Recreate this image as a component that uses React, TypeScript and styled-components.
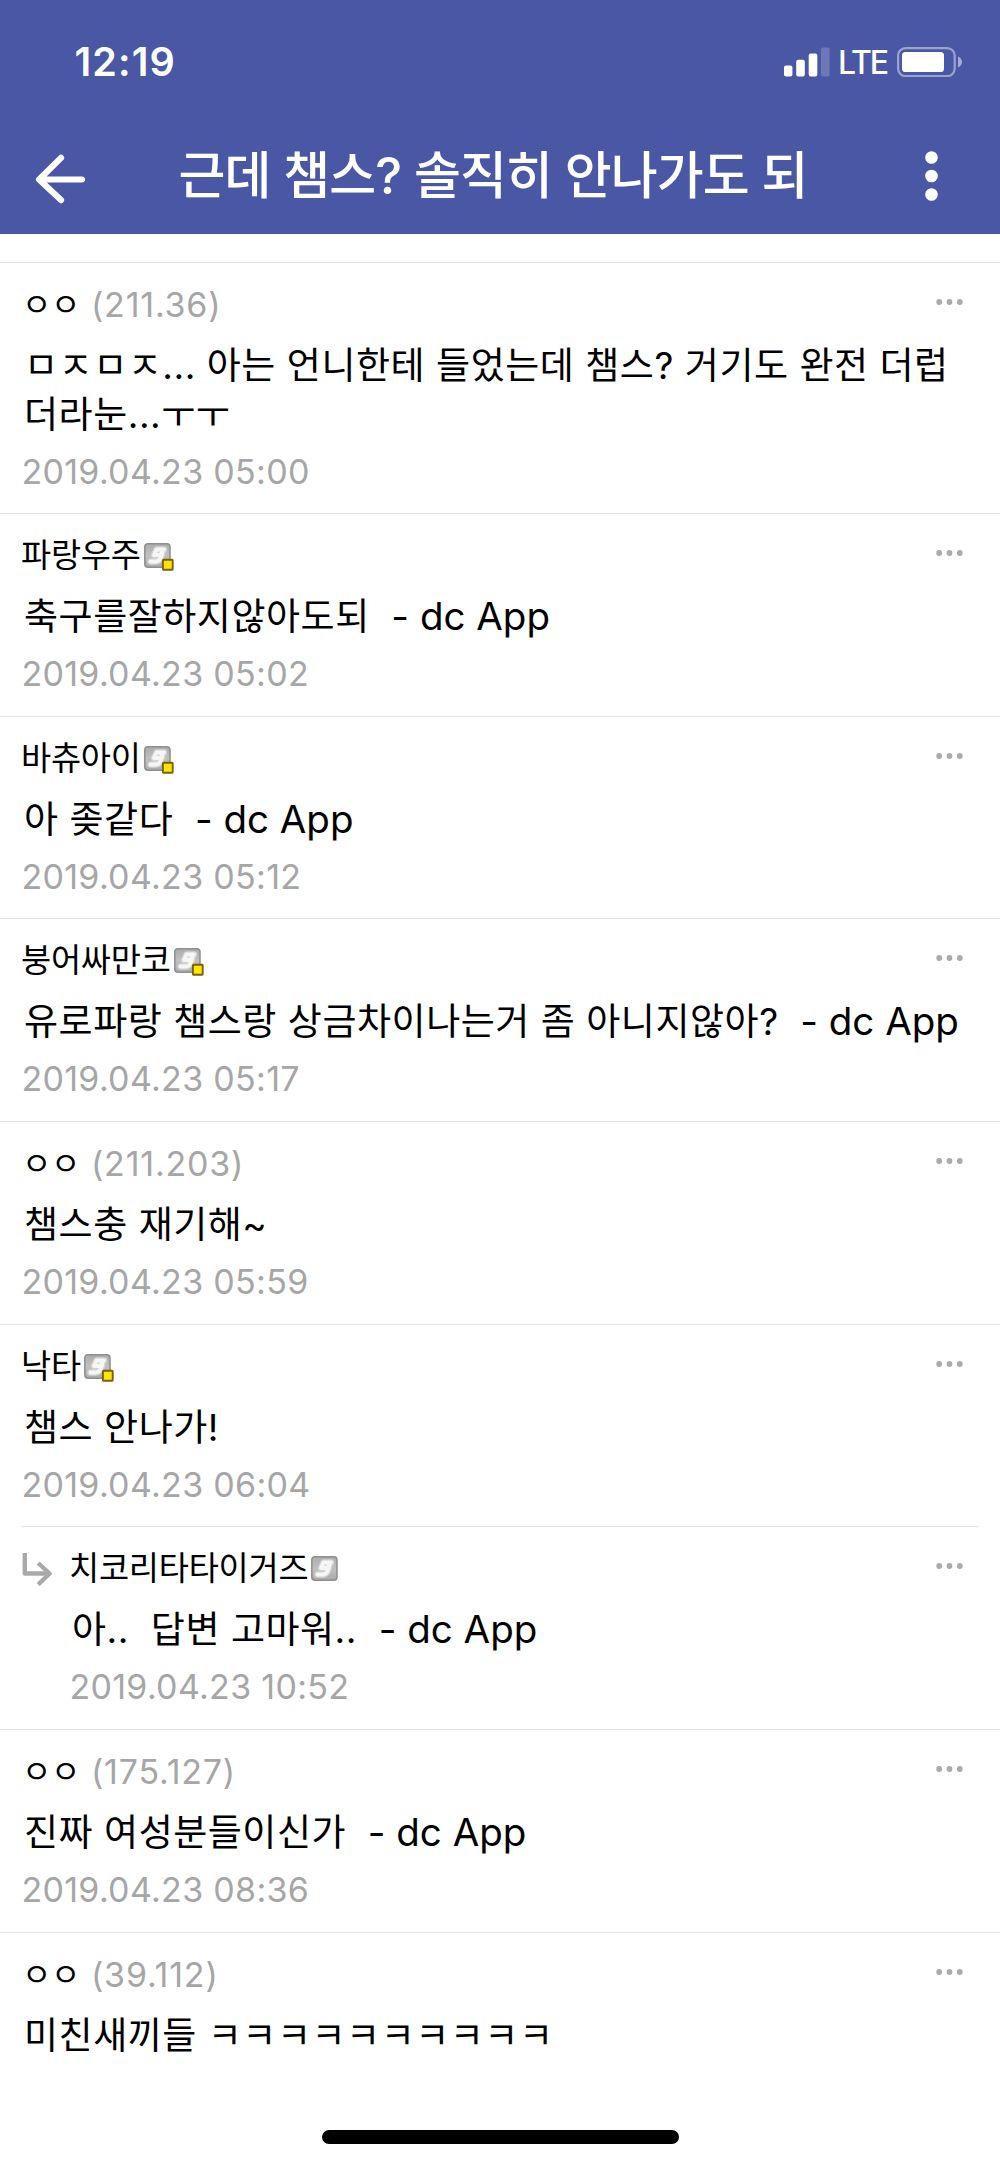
import React from 'react';
import styled, { createGlobalStyle } from 'styled-components';

const GlobalStyle = createGlobalStyle`
  *, *::before, *::after { box-sizing: border-box; }
  body {
    margin: 0;
    background: #fff;
    font-family: Inter, 'Noto Sans CJK KR', sans-serif;
    color: #000;
  }
`;

const Screen = styled.div`
  display: flex;
  flex-direction: column;
  width: 1000px;
  height: 2165px;
  overflow: hidden;
  background: #fff;
`;

const Header = styled.header`
  display: flex;
  flex-direction: column;
  flex: none;
  height: 234.4px;
  background: #4a57a5;
  color: #fff;
`;

const StatusBar = styled.div`
  display: flex;
  align-items: center;
  height: 123px;
  padding: 0 37px 0 74.5px;
`;

const Clock = styled.time`
  flex: 1;
  font-size: 39.5px;
  font-weight: 600;
  line-height: 48px;
  letter-spacing: 1.1px;
`;

const Network = styled.span`
  margin: 2px 10px 0 8.5px;
  font-size: 32px;
  font-weight: 500;
  line-height: 40px;
  letter-spacing: -2.1px;
`;

const NavBar = styled.div`
  display: flex;
  align-items: center;
  height: 111px;
  padding: 0 62px 0 35px;
`;

const IconButton = styled.button<{ $lift?: number }>`
  display: flex;
  flex: none;
  margin-bottom: ${(p) => p.$lift ?? 0}px;
  padding: 0;
  border: 0;
  background: none;
  color: inherit;
`;

const Title = styled.h1`
  flex: 1;
  margin: 0 0 6px 93.5px;
  font-size: 51px;
  font-weight: 500;
  line-height: 64px;
  letter-spacing: -0.9px;
  white-space: nowrap;
`;

const List = styled.main`
  display: flex;
  flex-direction: column;
  flex: 1;
  padding-top: 27.9px;
`;

const Row = styled.article<{ $reply?: boolean }>`
  display: flex;
  flex: none;
  margin: ${(p) => (p.$reply ? '0 22px' : '0')};
  padding: 17px ${(p) => (p.$reply ? 14 : 36)}px 17.65px ${(p) => (p.$reply ? 0 : 22)}px;
  border-top: 1px solid #e2e2e2;
`;

const ReplyMark = styled.div`
  flex: none;
  width: 48px;
  padding-top: 8px;
`;

const Content = styled.div`
  flex: 1;
  min-width: 0;
`;

const Meta = styled.div`
  display: flex;
  align-items: center;
  height: 48px;
`;

const Author = styled.span<{ $guest?: boolean }>`
  margin: ${(p) => (p.$guest ? '2px 0 0 0' : '0 0 0 -1px')};
  font-size: ${(p) => (p.$guest ? 32 : 32.8)}px;
  line-height: 48px;
  letter-spacing: ${(p) => (p.$guest ? -0.5 : -0.25)}px;
  white-space: nowrap;
`;

const Ip = styled.span`
  margin: 2px 0 0 11px;
  font-size: 34px;
  line-height: 48px;
  letter-spacing: 0.8px;
  color: #a6a6a6;
`;

const BadgeSlot = styled.span`
  display: flex;
  margin: 4px 0 0 3px;
`;

const MoreSlot = styled.span`
  display: flex;
  margin: 0 1.5px 4px auto;
`;

const Body = styled.p`
  margin: 14px -20px 0 2px;
  font-size: 37px;
  line-height: 48.3px;
  letter-spacing: 0.53px;
  white-space: pre;
`;

const Signature = styled.span`
  font-size: 38.5px;
  line-height: 1;
  letter-spacing: 0;
`;

const Stamp = styled.time`
  display: block;
  margin: 8.7px 0 0 -0.6px;
  font-size: 34px;
  line-height: 48px;
  letter-spacing: 0.31px;
  color: #a6a6a6;
`;

const HomeIndicator = styled.div`
  align-self: center;
  flex: none;
  width: 357px;
  height: 14px;
  margin-bottom: 21px;
  border-radius: 7px;
  background: #000;
`;

const BackIcon = () => (
  <svg width="50" height="50" viewBox="0 0 50 50" fill="none" stroke="currentColor" strokeWidth="6.2" strokeLinecap="round" strokeLinejoin="round">
    <path d="M47 25.5H4.5M26 3.9 4.1 25.5 26 46.1" />
  </svg>
);

const KebabIcon = () => (
  <svg width="13" height="50" viewBox="0 0 13 50" fill="currentColor">
    <circle cx="6.5" cy="6.5" r="6.3" />
    <circle cx="6.5" cy="25" r="6.3" />
    <circle cx="6.5" cy="43.5" r="6.3" />
  </svg>
);

const SignalIcon = () => (
  <svg width="46" height="30" viewBox="0 0 46 30" fill="#fff">
    <rect x="0" y="18.5" width="8.4" height="11" rx="2" />
    <rect x="12.2" y="12.7" width="8.6" height="16.8" rx="2" />
    <rect x="24.7" y="6.4" width="8.6" height="23.1" rx="2" />
    <rect x="37" y="0.5" width="8.6" height="29" rx="2" opacity="0.2" />
  </svg>
);

const BatteryIcon = () => (
  <svg width="66" height="30" viewBox="0 0 66 30">
    <rect x="1.1" y="1.1" width="56.6" height="28" rx="7.5" fill="none" stroke="#fff" strokeOpacity="0.45" strokeWidth="2.2" />
    <rect x="5" y="5" width="42" height="20" rx="3.6" fill="#fff" />
    <path d="M61 9.5c2.6 1.2 4 3 4 5.5s-1.4 4.3-4 5.5z" fill="#fff" fillOpacity="0.5" />
  </svg>
);

const MoreIcon = () => (
  <svg width="27" height="6" viewBox="0 0 27 6" fill="#ababab">
    <circle cx="3.2" cy="3" r="2.9" />
    <circle cx="13.5" cy="3" r="2.9" />
    <circle cx="23.8" cy="3" r="2.9" />
  </svg>
);

const ReplyIcon = () => (
  <svg width="32" height="34" viewBox="0 0 32 34" fill="none" stroke="#a9a9a9" strokeWidth="4.4" strokeLinejoin="round">
    <path d="M2.8 1v20.5H27.4" />
    <path d="M16.2 11 27.6 21.5 16.2 32.5" />
  </svg>
);

const MemberBadge = ({ fixed }: { fixed: boolean }) => (
  <svg width="30" height="28" viewBox="0 0 30 28">
    <defs>
      <linearGradient id="badgeFill" x1="0" y1="0" x2="0" y2="1">
        <stop offset="0" stopColor="#acacac" />
        <stop offset="0.5" stopColor="#c0c0c0" />
        <stop offset="1" stopColor="#ababab" />
      </linearGradient>
    </defs>
    <rect x="0.8" y="0.8" width="25.2" height="23.4" rx="3.2" fill="url(#badgeFill)" stroke="#8f8f8f" strokeWidth="1.5" />
    <g fill="none" strokeLinecap="round" strokeLinejoin="round">
      <path d="M20 6.5H12.5L10 12H16.500L19 6.5C18 12 17 18.5 12 18.5H6.500" stroke="#d2d2d2" strokeWidth="6.4" />
      <path d="M20 6.5H12.5L10 12H16.500L19 6.5C18 12 17 18.5 12 18.5H6.500" stroke="#f6f6f6" strokeWidth="3.8" />
    </g>
    {fixed && <rect x="18.9" y="16.7" width="9.8" height="10" rx="0.6" fill="#ffe600" stroke="#77600e" strokeWidth="1.9" />}
  </svg>
);

type Comment = {
  author: string;
  ip?: string;
  badge?: 'fixed' | 'plain';
  text: string;
  app?: boolean;
  date?: string;
  reply?: boolean;
};

const comments: Comment[] = [
  { author: 'ㅇㅇ', ip: '211.36', text: 'ㅁㅈㅁㅈ... 아는 언니한테 들었는데 챔스? 거기도 완전 더럽\n더라눈...ㅜㅜ', date: '2019.04.23 05:00' },
  { author: '파랑우주', badge: 'fixed', text: '축구를잘하지않아도되', app: true, date: '2019.04.23 05:02' },
  { author: '바츄아이', badge: 'fixed', text: '아 좆같다', app: true, date: '2019.04.23 05:12' },
  { author: '붕어싸만코', badge: 'fixed', text: '유로파랑 챔스랑 상금차이나는거 좀 아니지않아?', app: true, date: '2019.04.23 05:17' },
  { author: 'ㅇㅇ', ip: '211.203', text: '챔스충 재기해~', date: '2019.04.23 05:59' },
  { author: '낙타', badge: 'fixed', text: '챔스 안나가!', date: '2019.04.23 06:04' },
  { author: '치코리타타이거즈', badge: 'plain', text: '아..  답변 고마워..', app: true, date: '2019.04.23 10:52', reply: true },
  { author: 'ㅇㅇ', ip: '175.127', text: '진짜 여성분들이신가', app: true, date: '2019.04.23 08:36' },
  { author: 'ㅇㅇ', ip: '39.112', text: '미친새끼들 ㅋㅋㅋㅋㅋㅋㅋㅋㅋㅋ' },
];

const CommentRow = ({ c }: { c: Comment }) => (
  <Row $reply={c.reply}>
    {c.reply && (
      <ReplyMark>
        <ReplyIcon />
      </ReplyMark>
    )}
    <Content>
      <Meta>
        <Author $guest={Boolean(c.ip)}>{c.author}</Author>
        {c.ip && <Ip>({c.ip})</Ip>}
        {c.badge && (
          <BadgeSlot>
            <MemberBadge fixed={c.badge === 'fixed'} />
          </BadgeSlot>
        )}
        <MoreSlot>
          <MoreIcon />
        </MoreSlot>
      </Meta>
      <Body>
        {c.text}
        {c.app && <Signature>{'  - dc App'}</Signature>}
      </Body>
      {c.date && <Stamp>{c.date}</Stamp>}
    </Content>
  </Row>
);

export default function App() {
  return (
    <Screen>
      <GlobalStyle />
      <Header>
        <StatusBar>
          <Clock>12:19</Clock>
          <SignalIcon />
          <Network>LTE</Network>
          <BatteryIcon />
        </StatusBar>
        <NavBar>
          <IconButton aria-label="뒤로">
            <BackIcon />
          </IconButton>
          <Title>근데 챔스? 솔직히 안나가도 되</Title>
          <IconButton aria-label="메뉴" $lift={5}>
            <KebabIcon />
          </IconButton>
        </NavBar>
      </Header>
      <List>
        {comments.map((c, i) => (
          <CommentRow key={i} c={c} />
        ))}
      </List>
      <HomeIndicator />
    </Screen>
  );
}
